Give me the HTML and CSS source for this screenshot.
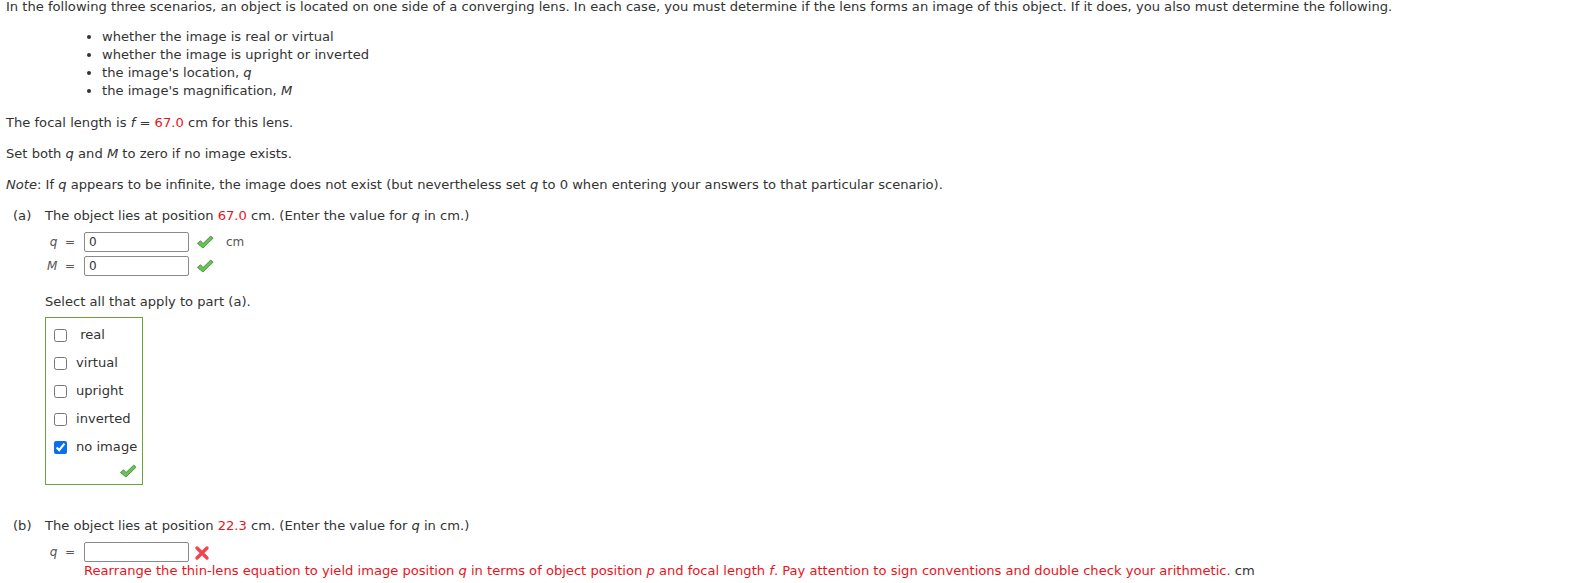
FILE: index.html
```html
<!DOCTYPE html>
<html lang="en">
<head>
  <meta charset="UTF-8">
  <title>Converging Lens</title>
  <link rel="stylesheet" href="styles.css">
</head>
<body>
  <div class="question">
    <p class="intro">In the following three scenarios, an object is located on one side of a converging lens. In each case, you must determine if the lens forms an image of this object. If it does, you also must determine the following.</p>
    <ul class="bullets">
      <li>whether the image is real or virtual</li>
      <li>whether the image is upright or inverted</li>
      <li>the image's location, <i>q</i></li>
      <li>the image's magnification, <i>M</i></li>
    </ul>
    <p>The focal length is <i>f</i> = <span class="red">67.0</span> cm for this lens.</p>
    <p>Set both <i>q</i> and <i>M</i> to zero if no image exists.</p>
    <p><i>Note</i>: If <i>q</i> appears to be infinite, the image does not exist (but nevertheless set <i>q</i> to 0 when entering your answers to that particular scenario).</p>

    <div class="part">
      <div class="part-label">(a)</div>
      <div class="part-body">
        <p class="prompt">The object lies at position <span class="red">67.0</span> cm. (Enter the value for <i>q</i> in cm.)</p>
        <div class="answer-row">
          <span class="var"><i>q</i>&nbsp; =</span>
          <input class="answer" type="text" value="0">
          <svg class="mark" width="18" height="16" viewBox="0 0 18 16"><path d="M1.5 9.5 L4.5 6.8 L7 9.6 L14.8 2 L17 4.3 L7 14 Z" fill="#6cbf5a" stroke="#4a9a3c" stroke-width="1" stroke-linejoin="round"/></svg>
          <span class="unit">cm</span>
        </div>
        <div class="answer-row">
          <span class="var"><i>M</i>&nbsp; =</span>
          <input class="answer" type="text" value="0">
          <svg class="mark" width="18" height="16" viewBox="0 0 18 16"><path d="M1.5 9.5 L4.5 6.8 L7 9.6 L14.8 2 L17 4.3 L7 14 Z" fill="#6cbf5a" stroke="#4a9a3c" stroke-width="1" stroke-linejoin="round"/></svg>
        </div>
        <p class="select-note">Select all that apply to part (a).</p>
        <div class="choices">
          <label class="choice"><input type="checkbox"> &nbsp;real</label>
          <label class="choice"><input type="checkbox"> virtual</label>
          <label class="choice"><input type="checkbox"> upright</label>
          <label class="choice"><input type="checkbox"> inverted</label>
          <label class="choice"><input type="checkbox" checked> no image</label>
          <div class="choices-mark">
            <svg width="18" height="16" viewBox="0 0 18 16"><path d="M1.5 9.5 L4.5 6.8 L7 9.6 L14.8 2 L17 4.3 L7 14 Z" fill="#6cbf5a" stroke="#4a9a3c" stroke-width="1" stroke-linejoin="round"/></svg>
          </div>
        </div>
      </div>
    </div>

    <div class="part part-b">
      <div class="part-label">(b)</div>
      <div class="part-body">
        <p class="prompt">The object lies at position <span class="red">22.3</span> cm. (Enter the value for <i>q</i> in cm.)</p>
        <div class="answer-row">
          <span class="var"><i>q</i>&nbsp; =</span>
          <input class="answer" type="text" value="">
          <svg class="cross" width="16" height="16" viewBox="0 0 16 16"><path d="M3 3 L13 13 M13 3 L3 13" stroke="#f0464b" stroke-width="3.4" stroke-linecap="round"/></svg>
        </div>
        <div class="hint-row">
          <span class="red">Rearrange the thin-lens equation to yield image position <i>q</i> in terms of object position <i>p</i> and focal length <i>f</i>. Pay attention to sign conventions and double check your arithmetic.</span> cm
        </div>
        <div class="answer-row next-row">
          <span class="var"></span>
          <input class="answer" type="text" value="">
        </div>
      </div>
    </div>
  </div>
</body>
</html>
```

FILE: styles.css
```css
body {
  margin: 0;
  padding: 0 6px;
  font-family: "DejaVu Sans", Verdana, sans-serif;
  font-size: 13.1px;
  line-height: 18px;
  color: #333;
  background: #fff;
  overflow: hidden;
}
p {
  margin: 13px 0;
}
.intro {
  margin-top: -2px;
  margin-bottom: 12px;
}
.red {
  color: #e8141c;
}
.bullets {
  margin: 0 0 14px;
  padding-left: 96px;
}
.part {
  display: flex;
  margin-top: 12px;
}
.part-b {
  margin-top: 32px;
}
.part-label {
  width: 39px;
  padding-left: 7px;
  box-sizing: border-box;
}
.part-body .prompt {
  margin: 0 0 5px;
}
.answer-row {
  display: flex;
  align-items: center;
  height: 24px;
}
.var {
  flex: none;
  width: 39px;
  box-sizing: border-box;
  text-align: right;
  padding-right: 9px;
  white-space: nowrap;
  color: #555;
  font-size: 12px;
}
.answer {
  width: 105px;
  height: 20px;
  box-sizing: border-box;
  border: 1px solid #8a8a8a;
  border-radius: 2px;
  padding: 0 4px;
  margin: 0;
  font-family: "DejaVu Sans", Verdana, sans-serif;
  font-size: 12px;
  color: #333;
  background: #fff;
}
.mark {
  margin-left: 7px;
}
.cross {
  margin-left: 5px;
  margin-top: 2px;
}
.unit {
  margin-left: 12px;
  color: #555;
  font-size: 12px;
}
.select-note {
  margin: 15px 0 6px;
}
.choices {
  width: 98px;
  box-sizing: border-box;
  border: 1px solid #6ba33d;
  padding: 3px 0 0 8px;
}
.choice {
  display: flex;
  align-items: center;
  height: 28px;
  gap: 9px;
}
.choice input {
  width: 13px;
  height: 13px;
  margin: 0;
  accent-color: #0a6ef0;
}
.choices-mark {
  display: flex;
  justify-content: flex-end;
  padding: 2px 5px 3px 0;
  height: 18px;
}
.hint-row {
  padding-left: 39px;
  margin-top: -2px;
}
.next-row {
  margin-top: 3px;
}
```
